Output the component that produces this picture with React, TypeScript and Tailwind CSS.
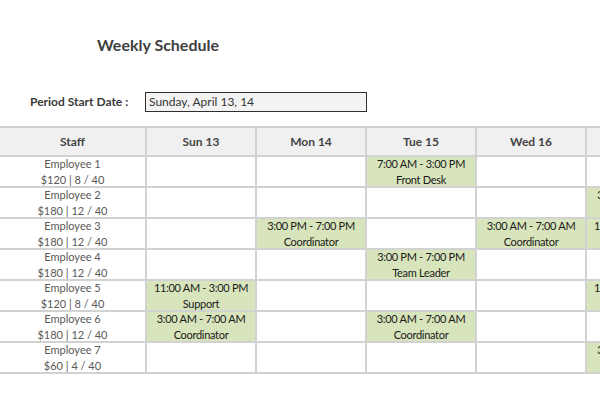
type Shift = { time: string; role: string } | null;

const days = ["Sun 13", "Mon 14", "Tue 15", "Wed 16", "Thu 17", "Fri 18", "Sat 19"];

const staff: { name: string; info: string; shifts: Shift[] }[] = [
  {
    name: "Employee 1",
    info: "$120 | 8 / 40",
    shifts: [null, null, { time: "7:00 AM - 3:00 PM", role: "Front Desk" }, null, null, null, null],
  },
  {
    name: "Employee 2",
    info: "$180 | 12 / 40",
    shifts: [null, null, null, null, { time: "3:00 PM - 7:00 PM", role: "Support" }, null, null],
  },
  {
    name: "Employee 3",
    info: "$180 | 12 / 40",
    shifts: [
      null,
      { time: "3:00 PM - 7:00 PM", role: "Coordinator" },
      null,
      { time: "3:00 AM - 7:00 AM", role: "Coordinator" },
      { time: "11:00 AM - 3:00 PM", role: "Front Desk" },
      null,
      null,
    ],
  },
  {
    name: "Employee 4",
    info: "$180 | 12 / 40",
    shifts: [null, null, { time: "3:00 PM - 7:00 PM", role: "Team Leader" }, null, null, null, null],
  },
  {
    name: "Employee 5",
    info: "$120 | 8 / 40",
    shifts: [
      { time: "11:00 AM - 3:00 PM", role: "Support" },
      null,
      null,
      null,
      { time: "11:00 AM - 3:00 PM", role: "Support" },
      null,
      null,
    ],
  },
  {
    name: "Employee 6",
    info: "$180 | 12 / 40",
    shifts: [
      { time: "3:00 AM - 7:00 AM", role: "Coordinator" },
      null,
      { time: "3:00 AM - 7:00 AM", role: "Coordinator" },
      null,
      null,
      null,
      null,
    ],
  },
  {
    name: "Employee 7",
    info: "$60 | 4 / 40",
    shifts: [null, null, null, null, { time: "3:00 PM - 7:00 PM", role: "Team Leader" }, null, null],
  },
];

export default function App() {
  return (
    <div
      className="w-[600px] h-[400px] overflow-hidden bg-white"
      style={{ fontFamily: "Lato, 'Open Sans', sans-serif" }}
    >
      <h1 className="pt-[35px] pl-[97px] text-[16px] leading-[20px] font-bold text-[#404040]">
        Weekly Schedule
      </h1>

      <div className="mt-[37px] flex items-center">
        <span className="w-[145px] pl-[30px] text-[12px] font-bold text-[#3a3a3a]">
          Period Start Date :
        </span>
        <div className="w-[222px] h-[20px] border-[1.5px] border-[#2e2e2e] bg-[#f3f3f3] px-[3px] text-[12px] leading-[17px] text-[#333]">
          Sunday, April 13, 14
        </div>
      </div>

      <div className="mt-[14px] w-max grid grid-cols-[145px_repeat(7,108px)] gap-[2px] bg-[#d2d2d2] pt-[2px] pb-[2px] text-[11px]">
        <div className="h-[27px] bg-[#f0f0f0] flex items-center justify-center text-[12px] font-bold text-[#444]">
          Staff
        </div>
        {days.map((d) => (
          <div
            key={d}
            className="h-[27px] bg-[#f0f0f0] flex items-center justify-center text-[12px] font-bold text-[#444]"
          >
            {d}
          </div>
        ))}

        {staff.map((s) => (
          <>
            <div
              key={s.name}
              className="h-[29px] bg-white flex flex-col items-center justify-center leading-[16px] text-[#595959]"
            >
              <span>{s.name}</span>
              <span>{s.info}</span>
            </div>
            {s.shifts.map((sh, i) =>
              sh ? (
                <div
                  key={s.name + i}
                  className="h-[29px] bg-[#d8e4bc] flex flex-col items-center justify-center leading-[16px] tracking-[-0.3px] text-[#1a1a1a] whitespace-nowrap"
                >
                  <span>{sh.time}</span>
                  <span>{sh.role}</span>
                </div>
              ) : (
                <div key={s.name + i} className="h-[29px] bg-white" />
              )
            )}
          </>
        ))}
      </div>
    </div>
  );
}
